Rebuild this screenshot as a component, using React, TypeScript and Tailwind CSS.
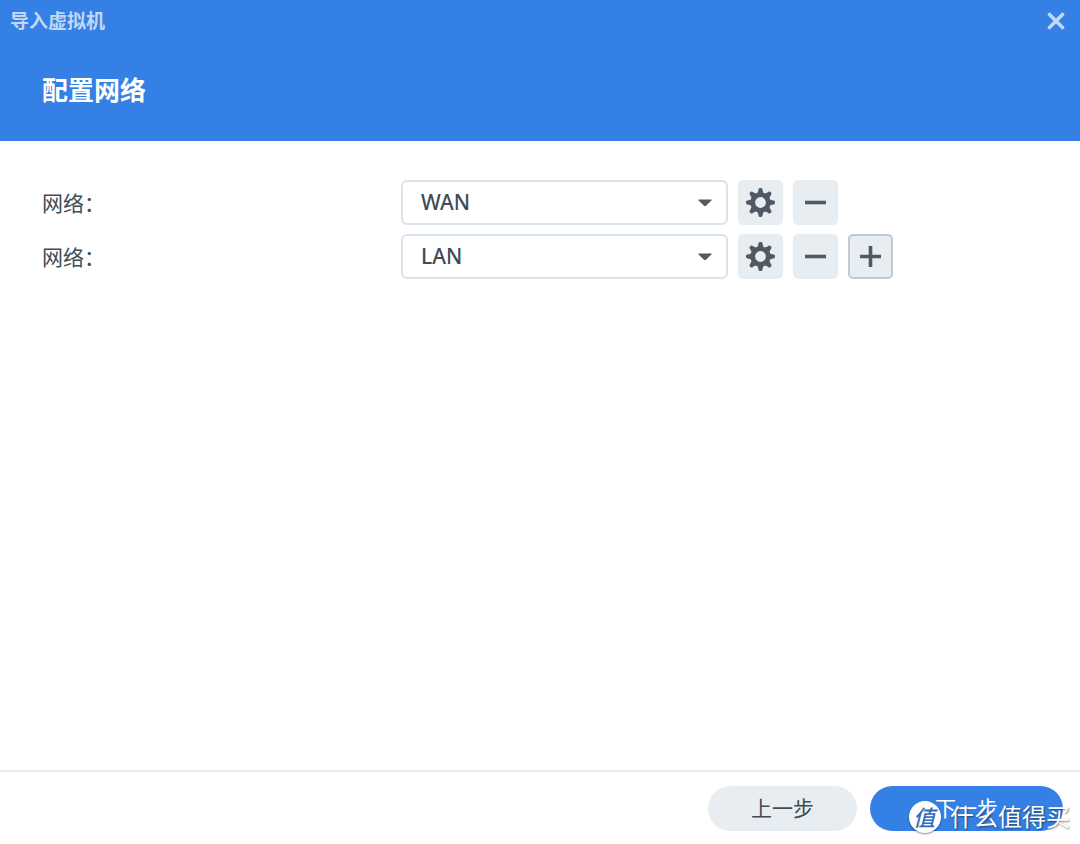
import { useState } from 'react'

const networks = ['WAN', 'LAN']

const GearIcon: React.FC = () => {
    return (
        <svg viewBox="-14 -14 28 28" className="size-[29px]" fill="currentColor" aria-hidden="true">
            <circle r="7.4" fill="none" stroke="currentColor" strokeWidth="4.4" />
            {[0, 45, 90, 135, 180, 225, 270, 315].map((angle) => (
                <path key={angle} transform={`rotate(${angle})`} d="M-3.9-8.4Q-2.5-9.6-2.2-11.2L-1.9-12.8Q-1.6-14-0.6-14H0.6Q1.6-14 1.9-12.8L2.2-11.2Q2.5-9.6 3.9-8.4z" />
            ))}
        </svg>
    )
}

const MinusIcon: React.FC = () => {
    return (
        <svg viewBox="0 0 21 21" className="size-[21px]" fill="currentColor" aria-hidden="true">
            <path d="M0 8.7h21v3.6H0z" />
        </svg>
    )
}

const PlusIcon: React.FC = () => {
    return (
        <svg viewBox="0 0 21 21" className="size-[21px]" fill="currentColor" aria-hidden="true">
            <path d="M0 8.7h8.7V0h3.6v8.7H21v3.6h-8.7V21H8.7v-8.7H0z" />
        </svg>
    )
}

type IconButtonProps = {
    label: string
    outlined?: boolean
    children: React.ReactNode
}

const IconButton: React.FC<IconButtonProps> = ({ label, outlined, children }) => {
    return (
        <button
            type="button"
            aria-label={label}
            className={`flex size-[45px] shrink-0 items-center justify-center rounded-[5px] border-2 bg-[#e8edf1] text-[#505a64] ${outlined ? 'border-[#c2c9d1]' : 'border-[#e8edf1]'}`}
        >
            {children}
        </button>
    )
}

type NetworkRowProps = {
    id: string
    initial: string
    last: boolean
}

const NetworkRow: React.FC<NetworkRowProps> = ({ id, initial, last }) => {
    const [value, setValue] = useState(initial)

    return (
        <div className="flex items-center gap-[10px]">
            <label htmlFor={id} className="w-[349px] shrink text-[21px] leading-7">网络：</label>
            <div className="grid w-[327px] items-center">
                <select
                    id={id}
                    value={value}
                    onChange={(e) => setValue(e.target.value)}
                    className="col-start-1 row-start-1 h-[45px] w-full appearance-none rounded-md border-2 border-[#dae2eb] bg-white pl-[18px] pr-10 text-[21px] font-medium"
                >
                    {networks.map((name) => <option key={name}>{name}</option>)}
                </select>
                <svg viewBox="0 0 14 8" className="pointer-events-none col-start-1 row-start-1 mr-4 h-2 w-3.5 justify-self-end" fill="#505a64" aria-hidden="true">
                    <path d="M1 0.5h12q1.2 0 0.4 0.9L8 6.8q-1 0.8-2 0L0.6 1.4Q-0.2 0.5 1 0.5z" />
                </svg>
            </div>
            <IconButton label="设置"><GearIcon /></IconButton>
            <IconButton label="删除"><MinusIcon /></IconButton>
            {last && <IconButton label="添加" outlined><PlusIcon /></IconButton>}
        </div>
    )
}

// Site mark laid over the bottom right corner
const Watermark: React.FC = () => {
    return (
        <div className="pointer-events-none absolute right-[10px] bottom-[9px] flex items-center gap-[9px] text-white">
            <span className="flex size-8 items-center justify-center rounded-full bg-white pr-[2px] text-[22px] font-medium italic text-[#2f6dbd] shadow-[0_1px_2px_rgba(0,0,0,0.45)]">值</span>
            <span className="text-2xl leading-9 [text-shadow:1px_1px_2px_rgba(0,0,0,0.5)]">什么值得买</span>
        </div>
    )
}

const App: React.FC = () => {
    return (
        <div className="relative flex min-h-screen flex-col bg-white font-['Noto_Sans','Noto_Sans_CJK_SC',sans-serif] text-[#414b55]">
            <header className="h-[141px] bg-[#3580e4]">
                <div className="flex h-[42px] items-center justify-between pr-[15px] pl-[10px] text-[#bfd8f8]">
                    <h1 className="text-[19px] leading-7 font-bold">导入虚拟机</h1>
                    <button type="button" aria-label="关闭">
                        <svg viewBox="0 0 18 18" className="size-[18px]" fill="none" stroke="currentColor" strokeWidth="3.6" strokeLinecap="round" aria-hidden="true">
                            <path d="M2.5 2.5l13 13M15.5 2.5l-13 13" />
                        </svg>
                    </button>
                </div>
                <h2 className="px-[42px] pt-8 text-[26px] leading-8 font-bold text-white">配置网络</h2>
            </header>
            <main className="flex flex-1 flex-col gap-[9px] px-[42px] pt-[39px]">
                {networks.map((name, i) => (
                    <NetworkRow key={name} id={`network-${i}`} initial={name} last={i === networks.length - 1} />
                ))}
            </main>
            <footer className="flex justify-end gap-[13px] border-t-2 border-[#e8ebf0] pt-[14px] pr-[17px] pb-[13px] text-[21px]">
                <button type="button" className="h-[45px] w-[149px] rounded-full bg-[#e8edf1]">上一步</button>
                <button type="button" className="h-[45px] w-[193px] rounded-full bg-[#3580e4] text-white">下一步</button>
            </footer>
            <Watermark />
        </div>
    )
}

export default App
